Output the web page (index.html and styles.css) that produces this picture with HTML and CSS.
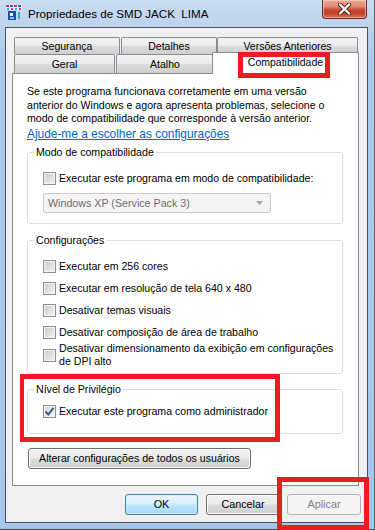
FILE: index.html
```html
<!DOCTYPE html>
<html lang="pt">
<head>
<meta charset="utf-8">
<title>Propriedades de SMD JACK LIMA</title>
<link rel="stylesheet" href="styles.css">
</head>
<body>
<div class="window">
  <div class="titlebar">
    <svg class="app-icon" width="16" height="16" viewBox="0 0 16 16">
      <rect x="0" y="0" width="16" height="5" fill="#e8eef8"/>
      <rect x="0" y="0" width="3" height="2" fill="#e0303a"/>
      <rect x="4" y="0" width="3" height="2" fill="#2a62c8"/>
      <rect x="8" y="0" width="3" height="2" fill="#e0303a"/>
      <rect x="12" y="0" width="3" height="2" fill="#2a62c8"/>
      <rect x="1" y="3" width="2" height="2" fill="#20b8e8"/>
      <rect x="5" y="3" width="2" height="2" fill="#d040c0"/>
      <rect x="9" y="3" width="2" height="2" fill="#20b8e8"/>
      <rect x="13" y="3" width="2" height="2" fill="#e0303a"/>
      <rect x="2" y="6" width="8" height="9" fill="#1d4fa8"/>
      <rect x="4" y="8" width="3" height="3" fill="#ffffff"/>
      <rect x="4" y="12" width="4" height="2" fill="#8fb8f0"/>
      <rect x="12" y="7" width="2" height="7" fill="#22b4e6"/>
    </svg>
    <span class="title">Propriedades de SMD JACK&nbsp; LIMA</span>
    <div class="close-btn">
      <svg width="13" height="12" viewBox="0 0 13 12">
        <path d="M2 1.5 L11 10.5 M11 1.5 L2 10.5" stroke="#4a1e18" stroke-width="4.2" stroke-linecap="round"/>
        <path d="M2 1.5 L11 10.5 M11 1.5 L2 10.5" stroke="#ffffff" stroke-width="2.4" stroke-linecap="round"/>
      </svg>
    </div>
  </div>

  <div class="client">
    <div class="tab-row back">
      <div class="tab t-seg">Segurança</div>
      <div class="tab t-det">Detalhes</div>
      <div class="tab t-ver">Versões Anteriores</div>
    </div>
    <div class="tab-row front">
      <div class="tab t-ger">Geral</div>
      <div class="tab t-ata">Atalho</div>
      <div class="tab selected t-com">Compatibilidade</div>
    </div>

    <div class="panel">
      <p class="intro">Se este programa funcionava corretamente em uma versão<br>anterior do Windows e agora apresenta problemas, selecione o<br>modo de compatibilidade que corresponde à versão anterior.</p>
      <a class="help-link">Ajude-me a escolher as configurações</a>

      <fieldset class="group g-mode">
        <legend>Modo de compatibilidade</legend>
        <div class="check"><span class="box"></span><span>Executar este programa em modo de compatibilidade:</span></div>
        <div class="select">
          <span>Windows XP (Service Pack 3)</span>
          <svg width="7" height="4" viewBox="0 0 7 4"><path d="M0 0 H7 L3.5 4 Z" fill="#a3a3a3"/></svg>
        </div>
      </fieldset>

      <fieldset class="group g-conf">
        <legend>Configurações</legend>
        <div class="check"><span class="box"></span><span>Executar em 256 cores</span></div>
        <div class="check row"><span class="box"></span><span>Executar em resolução de tela 640 x 480</span></div>
        <div class="check row"><span class="box"></span><span>Desativar temas visuais</span></div>
        <div class="check row"><span class="box"></span><span>Desativar composição de área de trabalho</span></div>
        <div class="check multi"><span class="box"></span><span>Desativar dimensionamento da exibição em configurações<br>de DPI alto</span></div>
      </fieldset>

      <fieldset class="group g-priv">
        <legend>Nível de Privilégio</legend>
        <div class="check"><span class="box checked"><svg width="11" height="11" viewBox="0 0 11 11"><path d="M1.5 5.5 L4.3 8.5 L9.5 1.8" fill="none" stroke="#3d5a94" stroke-width="2"/></svg></span><span>Executar este programa como administrador</span></div>
      </fieldset>

      <div class="btn btn-all">Alterar configurações de todos os usuários</div>
    </div>

    <div class="buttons">
      <div class="btn btn-default btn-ok">OK</div>
      <div class="btn btn-cancel">Cancelar</div>
      <div class="btn btn-disabled btn-apply">Aplicar</div>
    </div>
  </div>

  <div class="mark mark-tab"></div>
  <div class="mark mark-priv"></div>
  <div class="mark mark-apply"></div>
</div>
</body>
</html>
```

FILE: styles.css
```css
* { box-sizing: border-box; }
html, body { margin: 0; padding: 0; }
body {
  width: 375px;
  height: 530px;
  overflow: hidden;
  font-family: "Liberation Sans", Arial, sans-serif;
  font-size: 10.6px;
  color: #000;
}

.window {
  position: relative;
  width: 375px;
  height: 530px;
  display: flex;
  flex-direction: column;
  padding: 0 6px 6px 5px;
  border-right: 1px solid #56657a;
  border-bottom: 1px solid #3d4756;
  background: linear-gradient(180deg, #cadcf0 0px, #bcd3ec 27px, #a9c9ec 60px, #a6c7eb 100%);
}

/* title bar */
.titlebar {
  height: 27px;
  flex: none;
  display: flex;
  align-items: flex-start;
}
.app-icon { margin: 5px 0 0 1px; flex: none; }
.title {
  margin-left: 6px;
  line-height: 27px;
  font-size: 11.6px;
  white-space: nowrap;
  color: #000;
}
.close-btn {
  margin-left: auto;
  margin-right: 1px;
  width: 45px;
  height: 19px;
  display: flex;
  align-items: center;
  justify-content: center;
  border: 1px solid #6b2a22;
  border-top: none;
  border-radius: 0 0 4px 4px;
  background: linear-gradient(180deg, #e9a797 0%, #de8a79 35%, #c9442f 55%, #c4412c 75%, #d8705c 100%);
  box-shadow: inset 0 0 0 1px rgba(255, 220, 210, 0.55);
}
.close-btn svg { margin-top: -1px; }

/* client area */
.client {
  flex: 1;
  display: flex;
  flex-direction: column;
  background: #f0f0f0;
  border: 1px solid #465263;
  padding: 9px 8px 0 6px;
}

/* tabs */
.tab-row { display: flex; align-items: flex-start; flex: none; }
.tab-row.back { padding-left: 2px; height: 17px; }
.tab-row.front { padding-left: 2px; height: 19px; }
.tab {
  flex: none;
  border: 1px solid #898c95;
  border-bottom: none;
  border-radius: 2px 2px 0 0;
  text-align: center;
  white-space: nowrap;
  font-size: 10.5px;
  background: linear-gradient(180deg, #f3f3f3 0%, #ebebeb 48%, #dcdcdc 52%, #cfcfcf 100%);
}
.back .tab { height: 17px; line-height: 16px; }
.front .tab { height: 19px; line-height: 18px; }
.t-seg { width: 106px; margin-right: 1px; }
.t-det { width: 96px; }
.t-ver { width: 141px; }
.t-ger { width: 101px; margin-right: 1px; }
.t-ata { width: 98px; }
.front .tab.selected {
  position: relative;
  z-index: 1;
  width: 147px;
  height: 22px;
  margin: -2px 0 -1px -2px;
  line-height: 19px;
  background: #fff;
}

/* panel */
.panel {
  flex: none;
  height: 413px;
  background: #fff;
  border: 1px solid #898c95;
  padding: 11px 15px 0 14px;
  display: flex;
  flex-direction: column;
  align-items: stretch;
}
.intro {
  margin: 0;
  line-height: 13.5px;
  white-space: nowrap;
}
.help-link {
  display: block;
  align-self: flex-start;
  margin-top: 1.5px;
  line-height: 14px;
  font-size: 11.9px;
  color: #0066cc;
  text-decoration: underline;
  white-space: nowrap;
}

.group {
  margin: 0;
  min-width: 0;
  border: 1px solid #d5dfe5;
  border-radius: 3px;
  padding: 12px 15px 10px 15px;
}
.group legend {
  margin-left: -9px;
  padding: 0 2px;
  line-height: 14px;
  white-space: nowrap;
}
.g-mode { margin-top: 4px; }
.g-conf { margin-top: 9px; padding-bottom: 5px; }
.g-priv { margin-top: 8px; padding-top: 8px; padding-bottom: 15px; }

.check {
  display: flex;
  align-items: center;
  line-height: 14px;
  white-space: nowrap;
}
.check.row { margin-top: 8px; }
.check.multi { margin-top: 3px; line-height: 13px; }
.box {
  flex: none;
  width: 13px;
  height: 13px;
  margin-right: 3px;
  border: 1px solid #8e8f8f;
  box-shadow: inset 0 0 0 1px #f4f4f4;
  background: linear-gradient(135deg, #c6cacf 0%, #dfe1e3 55%, #f3f3f3 100%);
  display: flex;
  align-items: center;
  justify-content: center;
}
.box.checked { background: linear-gradient(135deg, #d4d7db 0%, #e9eaeb 55%, #f6f6f6 100%); }

.select {
  margin-top: 8px;
  width: 228px;
  height: 20px;
  border: 1px solid #c9cbce;
  border-radius: 2px;
  background: #f4f4f4;
  color: #6d6d6d;
  font-size: 10.7px;
  display: flex;
  align-items: center;
  justify-content: space-between;
  padding: 0 7px 0 4px;
  white-space: nowrap;
}

/* buttons */
.btn {
  height: 21px;
  line-height: 19px;
  text-align: center;
  white-space: nowrap;
  border: 1px solid #707070;
  border-radius: 3px;
  background: linear-gradient(180deg, #f2f2f2 0%, #ebebeb 48%, #dddddd 52%, #cfcfcf 100%);
  box-shadow: inset 0 0 0 1px #fbfbfb;
}
.btn-all {
  align-self: flex-start;
  width: 223px;
  margin: 14px 0 0 1px;
}
.buttons {
  flex: none;
  display: flex;
  justify-content: flex-end;
  margin: 8px -2px 0 0;
}
.buttons .btn { font-size: 10.8px; }
.btn-ok { width: 73px; }
.btn-cancel { width: 74px; margin-left: 8px; }
.btn-apply { width: 74px; margin-left: 7px; }
.btn-default {
  border-color: #3c7fb1;
  background: linear-gradient(180deg, #eaf6fd 0%, #d9f0fc 48%, #bee6fd 52%, #a7d9f5 100%);
  box-shadow: inset 0 0 0 1px #d4ecfb;
}
.btn-disabled {
  border-color: #adb2b5;
  background: #f4f4f4;
  box-shadow: none;
  color: #838383;
}

/* red annotation frames drawn over the screenshot */
.mark {
  position: absolute;
  border: 5px solid #ed1c24;
  pointer-events: none;
  z-index: 5;
}
.mark-tab { left: 238px; top: 52px; width: 92px; height: 26px; }
.mark-priv { left: 20px; top: 374px; width: 260px; height: 68px; border-left-width: 4px; }
.mark-apply { left: 277px; top: 477px; width: 92px; height: 53px; }
```
